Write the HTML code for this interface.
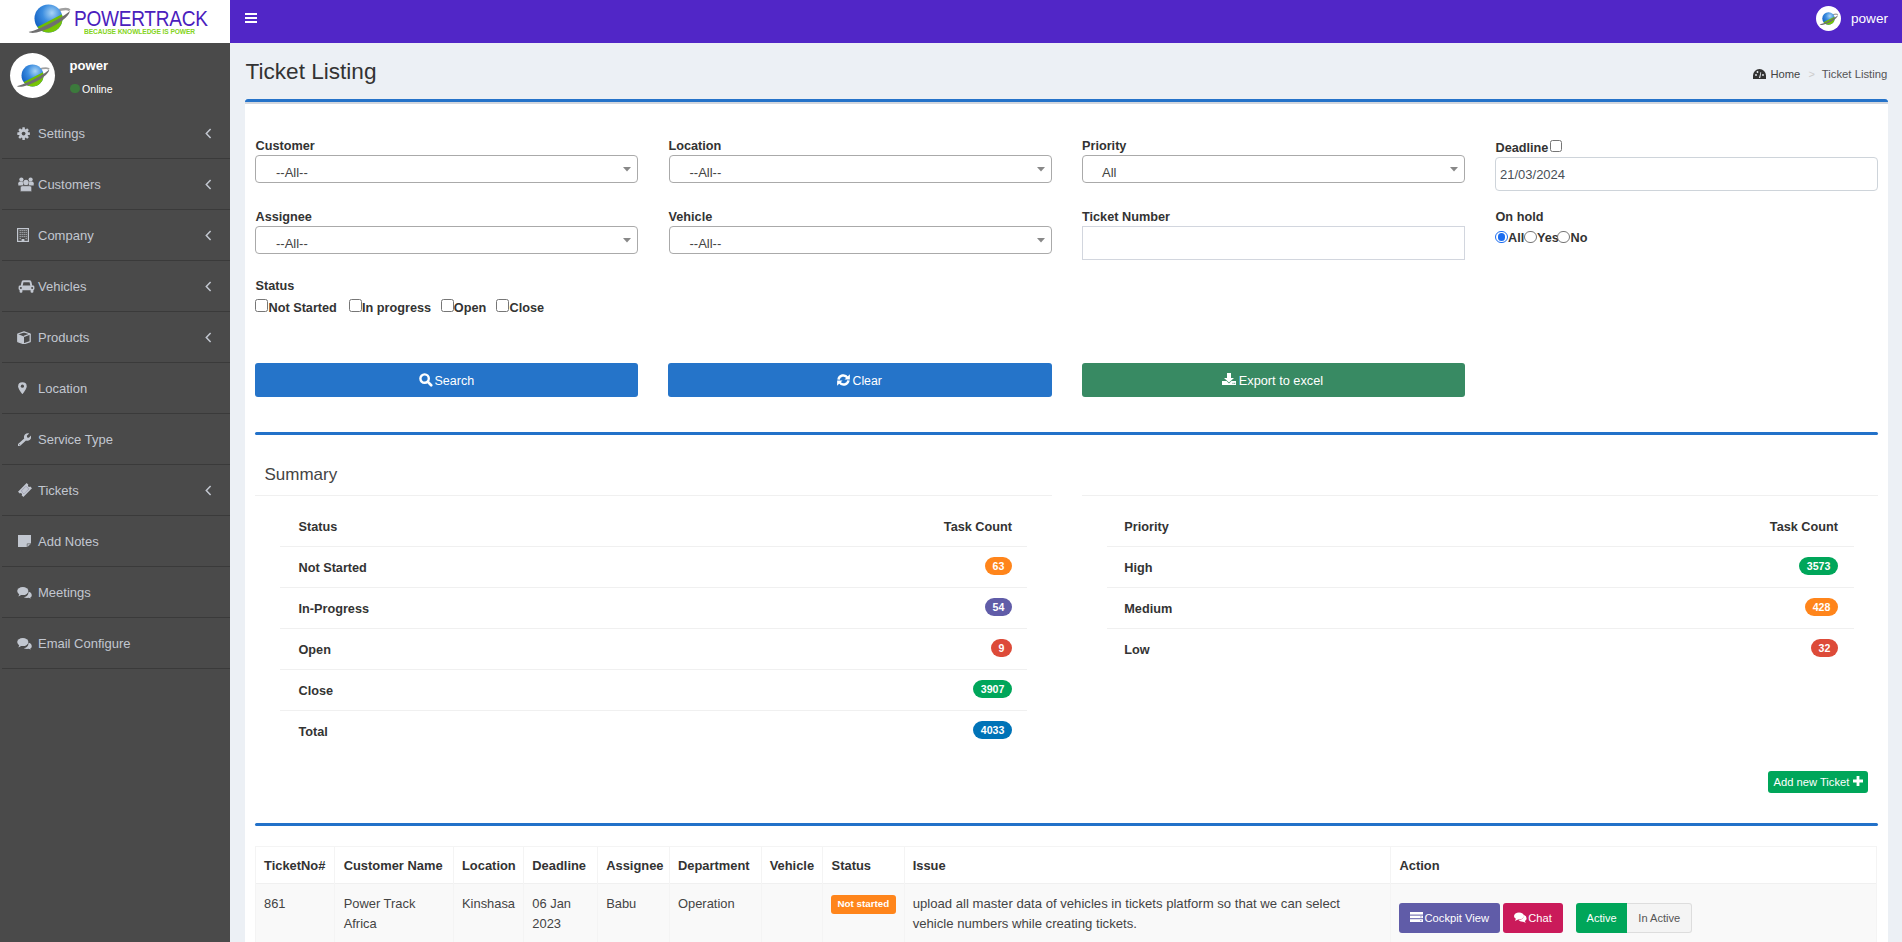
<!DOCTYPE html><html><head><meta charset="utf-8"><title>Ticket Listing</title><style>
*{margin:0;padding:0;box-sizing:border-box}
html,body{width:1902px;height:942px;overflow:hidden;background:#ecf0f5;font-family:"Liberation Sans",sans-serif}
.a{position:absolute;display:block}
.t{position:absolute;line-height:1;white-space:nowrap}
</style></head><body><div class="a" style="left:0px;top:0px;width:230px;height:43px;background:#fff"></div><div class="a" style="left:230px;top:0px;width:1672px;height:43px;background:#5126c7"></div><div class="a" style="left:245px;top:13px;width:12px;height:2px;background:#fff"></div><div class="a" style="left:245px;top:17px;width:12px;height:2px;background:#fff"></div><div class="a" style="left:245px;top:21px;width:12px;height:2px;background:#fff"></div><svg class="a" style="left:20px;top:0px;" width="60" height="43" viewBox="0 0 60 43"><defs><radialGradient id="gbL" cx=".62" cy=".3" r=".75"><stop offset="0" stop-color="#a9d4f5"/><stop offset=".45" stop-color="#3d8ee0"/><stop offset="1" stop-color="#0d5bc0"/></radialGradient>
<linearGradient id="ggL" x1="0" y1="0" x2="0" y2="1"><stop offset="0" stop-color="#6cbd00"/><stop offset="1" stop-color="#9be21a"/></linearGradient>
<clipPath id="gcL"><circle cx="28.5" cy="18.5" r="14"/></clipPath></defs>
<g transform="rotate(-27 29.0 21.0)"><path d="M29.0 14.5 A23.0 6.5 0 0 1 52.0 21.0" fill="none" stroke="#a0a0a0" stroke-width="2.4"/></g>
<circle cx="28.5" cy="18.5" r="14" fill="url(#gbL)"/>
<g clip-path="url(#gcL)"><g transform="rotate(-27 29.0 21.0)"><rect x="6.0" y="21.0" width="46.0" height="42" fill="url(#ggL)"/></g></g>
<g transform="rotate(-27 29.0 21.0)"><path d="M52.0 21.0 A23.0 6.5 0 0 1 6.0 21.0 A23.0 2.6 0 0 0 52.0 21.0Z" fill="#6f6f6f"/></g></svg><div class="t" style="left:73.50px;top:7.52px;font-size:21.6px;font-weight:400;color:#4a20bd;letter-spacing:-0.3px;transform:scaleX(0.883);transform-origin:0 0">POWERTRACK</div><div class="t" style="left:84.00px;top:27.77px;font-size:7.6px;font-weight:700;color:#84d420;letter-spacing:-0.1px;transform:scaleX(0.875);transform-origin:0 0">BECAUSE KNOWLEDGE IS POWER</div><div class="a" style="left:1816px;top:6px;width:25px;height:25px;background:#fff;border-radius:50%"></div><svg class="a" style="left:1816px;top:6px;" width="25" height="25" viewBox="0 0 25 25"><defs><radialGradient id="gbN" cx=".62" cy=".3" r=".75"><stop offset="0" stop-color="#a9d4f5"/><stop offset=".45" stop-color="#3d8ee0"/><stop offset="1" stop-color="#0d5bc0"/></radialGradient>
<linearGradient id="ggN" x1="0" y1="0" x2="0" y2="1"><stop offset="0" stop-color="#6cbd00"/><stop offset="1" stop-color="#9be21a"/></linearGradient>
<clipPath id="gcN"><circle cx="12.5" cy="12.5" r="6.2"/></clipPath></defs>
<g transform="rotate(-27 12.721428571428572 13.607142857142858)"><path d="M12.721428571428572 10.728571428571428 A10.185714285714287 2.878571428571429 0 0 1 22.90714285714286 13.607142857142858" fill="none" stroke="#a0a0a0" stroke-width="1.062857142857143"/></g>
<circle cx="12.5" cy="12.5" r="6.2" fill="url(#gbN)"/>
<g clip-path="url(#gcN)"><g transform="rotate(-27 12.721428571428572 13.607142857142858)"><rect x="2.5357142857142847" y="13.607142857142858" width="20.371428571428574" height="18.6" fill="url(#ggN)"/></g></g>
<g transform="rotate(-27 12.721428571428572 13.607142857142858)"><path d="M22.90714285714286 13.607142857142858 A10.185714285714287 2.878571428571429 0 0 1 2.5357142857142847 13.607142857142858 A10.185714285714287 1.1514285714285717 0 0 0 22.90714285714286 13.607142857142858Z" fill="#6f6f6f"/></g></svg><div class="t" style="left:1851.00px;top:12.29px;font-size:13.6px;font-weight:400;color:#fff;">power</div><div class="a" style="left:0px;top:43px;width:230px;height:899px;background:#4a4a4a"></div><div class="a" style="left:10px;top:53px;width:45px;height:45px;background:#fff;border-radius:50%"></div><svg class="a" style="left:10px;top:53px;" width="45" height="45" viewBox="0 0 45 45"><defs><radialGradient id="gbS" cx=".62" cy=".3" r=".75"><stop offset="0" stop-color="#a9d4f5"/><stop offset=".45" stop-color="#3d8ee0"/><stop offset="1" stop-color="#0d5bc0"/></radialGradient>
<linearGradient id="ggS" x1="0" y1="0" x2="0" y2="1"><stop offset="0" stop-color="#6cbd00"/><stop offset="1" stop-color="#9be21a"/></linearGradient>
<clipPath id="gcS"><circle cx="22.5" cy="22.5" r="11"/></clipPath></defs>
<g transform="rotate(-27 22.892857142857142 24.464285714285715)"><path d="M22.892857142857142 19.357142857142858 A18.07142857142857 5.107142857142857 0 0 1 40.96428571428571 24.464285714285715" fill="none" stroke="#a0a0a0" stroke-width="1.8857142857142857"/></g>
<circle cx="22.5" cy="22.5" r="11" fill="url(#gbS)"/>
<g clip-path="url(#gcS)"><g transform="rotate(-27 22.892857142857142 24.464285714285715)"><rect x="4.821428571428573" y="24.464285714285715" width="36.14285714285714" height="33" fill="url(#ggS)"/></g></g>
<g transform="rotate(-27 22.892857142857142 24.464285714285715)"><path d="M40.96428571428571 24.464285714285715 A18.07142857142857 5.107142857142857 0 0 1 4.821428571428573 24.464285714285715 A18.07142857142857 2.0428571428571427 0 0 0 40.96428571428571 24.464285714285715Z" fill="#6f6f6f"/></g></svg><div class="t" style="left:69.50px;top:59.21px;font-size:13.1px;font-weight:700;color:#fff;">power</div><div class="a" style="left:70px;top:83.8px;width:9.5px;height:9.5px;background:#3c7a3c;border-radius:50%"></div><div class="t" style="left:82.00px;top:84.13px;font-size:10.6px;font-weight:400;color:#fff;">Online</div><div class="a" style="left:1.5px;top:158px;width:228.5px;height:1px;background:#3a3a3a"></div><svg class="a" style="left:17.3px;top:126.5px;" width="13.2" height="13.2" viewBox="0 0 13.2 13.2"><g fill="#c2c7d0"><rect x="5.3" y="0.3" width="2.6" height="12.6" rx=".5" transform="rotate(0 6.6 6.6)"/><rect x="5.3" y="0.3" width="2.6" height="12.6" rx=".5" transform="rotate(45 6.6 6.6)"/><rect x="5.3" y="0.3" width="2.6" height="12.6" rx=".5" transform="rotate(90 6.6 6.6)"/><rect x="5.3" y="0.3" width="2.6" height="12.6" rx=".5" transform="rotate(135 6.6 6.6)"/><circle cx="6.6" cy="6.6" r="4.6"/></g><circle cx="6.6" cy="6.6" r="1.9" fill="#4a4a4a"/></svg><div class="t" style="left:38.00px;top:126.80px;font-size:13px;font-weight:400;color:#c2c7d0;">Settings</div><svg class="a" style="left:204.5px;top:127.5px;" width="7" height="11" viewBox="0 0 7 11"><path d="M5.6 1 L1.3 5.5 L5.6 10" stroke="#c2c7d0" stroke-width="1.5" fill="none"/></svg><div class="a" style="left:1.5px;top:209px;width:228.5px;height:1px;background:#3a3a3a"></div><svg class="a" style="left:17.5px;top:176.5px;" width="16" height="15" viewBox="0 0 16 15"><g fill="#c2c7d0"><circle cx="3.4" cy="2.5" r="2.1"/><circle cx="12.6" cy="2.5" r="2.1"/><path d="M0.3 8.6 L0.3 6.2 Q0.3 4.6 2 4.6 L5.2 4.6 L5.2 8.6Z"/><path d="M15.7 8.6 L15.7 6.2 Q15.7 4.6 14 4.6 L10.8 4.6 L10.8 8.6Z"/></g><circle cx="8" cy="5.4" r="3.1" fill="#4a4a4a"/><circle cx="8" cy="5.4" r="2.7" fill="#c2c7d0"/><path d="M2.4 14.4 L2.4 10.8 Q2.4 8.8 4.4 8.8 L11.6 8.8 Q13.6 8.8 13.6 10.8 L13.6 14.4Z" fill="#c2c7d0" stroke="#4a4a4a" stroke-width=".5"/></svg><div class="t" style="left:38.00px;top:177.80px;font-size:13px;font-weight:400;color:#c2c7d0;">Customers</div><svg class="a" style="left:204.5px;top:178.5px;" width="7" height="11" viewBox="0 0 7 11"><path d="M5.6 1 L1.3 5.5 L5.6 10" stroke="#c2c7d0" stroke-width="1.5" fill="none"/></svg><div class="a" style="left:1.5px;top:260px;width:228.5px;height:1px;background:#3a3a3a"></div><svg class="a" style="left:17.4px;top:227.8px;" width="12" height="14" viewBox="0 0 12 14"><rect x="0.6" y="0.6" width="10.8" height="12.8" fill="none" stroke="#c2c7d0" stroke-width="1.2"/><rect x="2.6" y="2.1" width="1.1" height="1.1" fill="#c2c7d0"/><rect x="2.6" y="4.1" width="1.1" height="1.1" fill="#c2c7d0"/><rect x="2.6" y="6.1" width="1.1" height="1.1" fill="#c2c7d0"/><rect x="2.6" y="8.1" width="1.1" height="1.1" fill="#c2c7d0"/><rect x="4.6" y="2.1" width="1.1" height="1.1" fill="#c2c7d0"/><rect x="4.6" y="4.1" width="1.1" height="1.1" fill="#c2c7d0"/><rect x="4.6" y="6.1" width="1.1" height="1.1" fill="#c2c7d0"/><rect x="4.6" y="8.1" width="1.1" height="1.1" fill="#c2c7d0"/><rect x="6.6" y="2.1" width="1.1" height="1.1" fill="#c2c7d0"/><rect x="6.6" y="4.1" width="1.1" height="1.1" fill="#c2c7d0"/><rect x="6.6" y="6.1" width="1.1" height="1.1" fill="#c2c7d0"/><rect x="6.6" y="8.1" width="1.1" height="1.1" fill="#c2c7d0"/><rect x="8.6" y="2.1" width="1.1" height="1.1" fill="#c2c7d0"/><rect x="8.6" y="4.1" width="1.1" height="1.1" fill="#c2c7d0"/><rect x="8.6" y="6.1" width="1.1" height="1.1" fill="#c2c7d0"/><rect x="8.6" y="8.1" width="1.1" height="1.1" fill="#c2c7d0"/><rect x="2.6" y="10.1" width="1.1" height="1.1" fill="#c2c7d0"/><rect x="8.6" y="10.1" width="1.1" height="1.1" fill="#c2c7d0"/><rect x="4.6" y="11" width="2.8" height="2.2" fill="#c2c7d0"/></svg><div class="t" style="left:38.00px;top:228.80px;font-size:13px;font-weight:400;color:#c2c7d0;">Company</div><svg class="a" style="left:204.5px;top:229.5px;" width="7" height="11" viewBox="0 0 7 11"><path d="M5.6 1 L1.3 5.5 L5.6 10" stroke="#c2c7d0" stroke-width="1.5" fill="none"/></svg><div class="a" style="left:1.5px;top:311px;width:228.5px;height:1px;background:#3a3a3a"></div><svg class="a" style="left:17.5px;top:280px;" width="17" height="13" viewBox="0 0 17 13"><path d="M3.6 6 L4.5 2 Q4.8 1.2 5.6 1.2 L11.4 1.2 Q12.2 1.2 12.5 2 L13.4 6" fill="none" stroke="#c2c7d0" stroke-width="1.9"/><rect x="0.6" y="5.6" width="15.8" height="4.6" rx="1.4" fill="#c2c7d0"/><circle cx="2.9" cy="7.9" r="1" fill="#4a4a4a"/><circle cx="14.1" cy="7.9" r="1" fill="#4a4a4a"/><rect x="1.6" y="9.4" width="2.8" height="3.4" rx="1" fill="#c2c7d0"/><rect x="12.6" y="9.4" width="2.8" height="3.4" rx="1" fill="#c2c7d0"/></svg><div class="t" style="left:38.00px;top:279.80px;font-size:13px;font-weight:400;color:#c2c7d0;">Vehicles</div><svg class="a" style="left:204.5px;top:280.5px;" width="7" height="11" viewBox="0 0 7 11"><path d="M5.6 1 L1.3 5.5 L5.6 10" stroke="#c2c7d0" stroke-width="1.5" fill="none"/></svg><div class="a" style="left:1.5px;top:362px;width:228.5px;height:1px;background:#3a3a3a"></div><svg class="a" style="left:17.4px;top:330.7px;" width="14" height="13.6" viewBox="0 0 14 13.6"><path d="M7 0.8 L13.2 3 L13.2 10.6 L7 12.8 L0.8 10.6 L0.8 3Z" fill="none" stroke="#c2c7d0" stroke-width="1.3" stroke-linejoin="round"/><path d="M0.8 3 L7 5.4 L7 12.8 L0.8 10.6Z" fill="#c2c7d0"/><path d="M7 5.4 L13.2 3" stroke="#c2c7d0" stroke-width="1.3"/></svg><div class="t" style="left:38.00px;top:330.80px;font-size:13px;font-weight:400;color:#c2c7d0;">Products</div><svg class="a" style="left:204.5px;top:331.5px;" width="7" height="11" viewBox="0 0 7 11"><path d="M5.6 1 L1.3 5.5 L5.6 10" stroke="#c2c7d0" stroke-width="1.5" fill="none"/></svg><div class="a" style="left:1.5px;top:413px;width:228.5px;height:1px;background:#3a3a3a"></div><svg class="a" style="left:17.6px;top:381.7px;" width="9" height="12.4" viewBox="0 0 9 12.4"><path d="M4.4 0.2 Q8.7 0.2 8.7 4.4 Q8.7 6.6 4.4 12.2 Q0.1 6.6 0.1 4.4 Q0.1 0.2 4.4 0.2Z" fill="#c2c7d0"/><circle cx="4.4" cy="4.2" r="1.6" fill="#4a4a4a"/></svg><div class="t" style="left:38.00px;top:381.80px;font-size:13px;font-weight:400;color:#c2c7d0;">Location</div><div class="a" style="left:1.5px;top:464px;width:228.5px;height:1px;background:#3a3a3a"></div><svg class="a" style="left:17.9px;top:432.6px;" width="13.6" height="13.8" viewBox="0 0 13.6 13.8"><path d="M2.2 12.8 Q1 13.9 0 12.9 Q-0.9 11.8 0.3 10.7 L6.2 5.5 Q5.4 3.3 6.9 1.6 Q8.6 -0.2 11.2 0.4 L8.8 2.8 L9.2 4.4 L10.8 4.8 L13.2 2.4 Q13.8 5 12 6.7 Q10.3 8.2 8 7.5Z" fill="#c2c7d0"/><circle cx="1.6" cy="11.7" r=".5" fill="#4a4a4a"/></svg><div class="t" style="left:38.00px;top:432.80px;font-size:13px;font-weight:400;color:#c2c7d0;">Service Type</div><div class="a" style="left:1.5px;top:515px;width:228.5px;height:1px;background:#3a3a3a"></div><svg class="a" style="left:17.9px;top:482.9px;" width="14" height="14" viewBox="0 0 14 14"><g transform="rotate(-45 7 7)"><path d="M0.9 3.2 L13.1 3.2 L13.1 5.7 Q11.8 5.8 11.8 7 Q11.8 8.2 13.1 8.3 L13.1 10.8 L0.9 10.8 L0.9 8.3 Q2.2 8.2 2.2 7 Q2.2 5.8 0.9 5.7Z" fill="#c2c7d0"/><rect x="3.6" y="5" width="6.8" height="4" fill="none" stroke="#7d7596" stroke-width=".7" stroke-dasharray=".9 .7"/></g></svg><div class="t" style="left:38.00px;top:483.80px;font-size:13px;font-weight:400;color:#c2c7d0;">Tickets</div><svg class="a" style="left:204.5px;top:484.5px;" width="7" height="11" viewBox="0 0 7 11"><path d="M5.6 1 L1.3 5.5 L5.6 10" stroke="#c2c7d0" stroke-width="1.5" fill="none"/></svg><div class="a" style="left:1.5px;top:566px;width:228.5px;height:1px;background:#3a3a3a"></div><svg class="a" style="left:17.5px;top:534.7px;" width="13" height="12.3" viewBox="0 0 13 12.3"><path d="M0 0 L13 0 L13 8.6 L9 12.3 L0 12.3Z" fill="#c2c7d0"/><path d="M9.2 12.3 L9.2 8.8 L13 8.8Z" fill="#c2c7d0" stroke="#4a4a4a" stroke-width=".6"/></svg><div class="t" style="left:38.00px;top:534.80px;font-size:13px;font-weight:400;color:#c2c7d0;">Add Notes</div><div class="a" style="left:1.5px;top:617px;width:228.5px;height:1px;background:#3a3a3a"></div><svg class="a" style="left:17.4px;top:586.5px;" width="15" height="12" viewBox="0 0 15 12"><g fill="#c2c7d0"><path d="M9.6 4.4 Q14.8 4.6 14.8 8.2 Q14.8 10 13.2 10.6 L14 11.4 L11.4 10.8 Q8.8 11.2 6.8 10.2 Q10.6 9.6 11.4 6.6Z"/></g><ellipse cx="5.8" cy="4.2" rx="6" ry="4.4" fill="#4a4a4a"/><g fill="#c2c7d0"><ellipse cx="5.8" cy="4.1" rx="5.6" ry="4"/><path d="M1.4 9.4 L2.4 6.8 L4.6 7.8Z"/></g></svg><div class="t" style="left:38.00px;top:585.80px;font-size:13px;font-weight:400;color:#c2c7d0;">Meetings</div><div class="a" style="left:1.5px;top:668px;width:228.5px;height:1px;background:#3a3a3a"></div><svg class="a" style="left:17.4px;top:637.5px;" width="15" height="12" viewBox="0 0 15 12"><g fill="#c2c7d0"><path d="M9.6 4.4 Q14.8 4.6 14.8 8.2 Q14.8 10 13.2 10.6 L14 11.4 L11.4 10.8 Q8.8 11.2 6.8 10.2 Q10.6 9.6 11.4 6.6Z"/></g><ellipse cx="5.8" cy="4.2" rx="6" ry="4.4" fill="#4a4a4a"/><g fill="#c2c7d0"><ellipse cx="5.8" cy="4.1" rx="5.6" ry="4"/><path d="M1.4 9.4 L2.4 6.8 L4.6 7.8Z"/></g></svg><div class="t" style="left:38.00px;top:636.80px;font-size:13px;font-weight:400;color:#c2c7d0;">Email Configure</div><div class="t" style="left:245.50px;top:61.07px;font-size:22.6px;font-weight:400;color:#333;">Ticket Listing</div><div class="t" style="left:1770.50px;top:69.02px;font-size:11.2px;font-weight:400;color:#444;">Home</div><div class="t" style="left:1808.50px;top:69.19px;font-size:11px;font-weight:400;color:#ccc;">&gt;</div><div class="t" style="left:1821.80px;top:68.93px;font-size:11.3px;font-weight:400;color:#555;">Ticket Listing</div><svg class="a" style="left:1753px;top:69px;" width="13" height="10" viewBox="0 0 13 10"><path d="M6.5 0 A6.5 6.5 0 0 1 13 6.5 L13 10 L0 10 L0 6.5 A6.5 6.5 0 0 1 6.5 0Z" fill="#333"/><path d="M6 9 L7.6 3 L8.2 3.2 L7.2 9Z" fill="#ecf0f5"/><circle cx="3" cy="6" r=".9" fill="#ecf0f5"/><circle cx="4.5" cy="3" r=".9" fill="#ecf0f5"/><circle cx="10" cy="6" r=".9" fill="#ecf0f5"/></svg><div class="a" style="left:245px;top:99px;width:1643px;height:843px;background:#fff"></div><div class="a" style="left:245px;top:99px;width:1643px;height:3px;background:#2573c9;border-radius:3px 3px 0 0"></div><div class="a" style="left:245px;top:102px;width:1643px;height:2px;background:#d3d7de"></div><div class="t" style="left:255.50px;top:140.05px;font-size:12.7px;font-weight:700;color:#333;">Customer</div><div class="a" style="left:255px;top:155px;width:383px;height:28px;border:1px solid #aaa;border-radius:4px;background:#fff"></div><div class="t" style="left:276.00px;top:166.30px;font-size:13px;font-weight:400;color:#444;">--All--</div><svg class="a" style="left:623px;top:167px;" width="8" height="5" viewBox="0 0 8 5"><path d="M0 0 L8 0 L4 4.6Z" fill="#888"/></svg><div class="t" style="left:668.50px;top:140.05px;font-size:12.7px;font-weight:700;color:#333;">Location</div><div class="a" style="left:668.5px;top:155px;width:383px;height:28px;border:1px solid #aaa;border-radius:4px;background:#fff"></div><div class="t" style="left:689.50px;top:166.30px;font-size:13px;font-weight:400;color:#444;">--All--</div><svg class="a" style="left:1036.5px;top:167px;" width="8" height="5" viewBox="0 0 8 5"><path d="M0 0 L8 0 L4 4.6Z" fill="#888"/></svg><div class="t" style="left:1082.00px;top:140.05px;font-size:12.7px;font-weight:700;color:#333;">Priority</div><div class="a" style="left:1082px;top:155px;width:383px;height:28px;border:1px solid #aaa;border-radius:4px;background:#fff"></div><div class="t" style="left:1102.00px;top:166.30px;font-size:13px;font-weight:400;color:#444;">All</div><svg class="a" style="left:1450px;top:167px;" width="8" height="5" viewBox="0 0 8 5"><path d="M0 0 L8 0 L4 4.6Z" fill="#888"/></svg><div class="t" style="left:1495.50px;top:141.95px;font-size:12.7px;font-weight:700;color:#333;">Deadline</div><div class="a" style="left:1549.5px;top:139.5px;width:12.5px;height:12.5px;border:1px solid #767676;border-radius:2.5px;background:#fff"></div><div class="a" style="left:1495px;top:157px;width:383px;height:34px;border:1px solid #ced4da;border-radius:4px;background:#fff"></div><div class="t" style="left:1500.00px;top:168.00px;font-size:13px;font-weight:400;color:#495057;">21/03/2024</div><div class="t" style="left:255.50px;top:210.85px;font-size:12.7px;font-weight:700;color:#333;">Assignee</div><div class="a" style="left:255px;top:226px;width:383px;height:28px;border:1px solid #aaa;border-radius:4px;background:#fff"></div><div class="t" style="left:276.00px;top:237.30px;font-size:13px;font-weight:400;color:#444;">--All--</div><svg class="a" style="left:623px;top:238px;" width="8" height="5" viewBox="0 0 8 5"><path d="M0 0 L8 0 L4 4.6Z" fill="#888"/></svg><div class="t" style="left:668.50px;top:210.85px;font-size:12.7px;font-weight:700;color:#333;">Vehicle</div><div class="a" style="left:668.5px;top:226px;width:383px;height:28px;border:1px solid #aaa;border-radius:4px;background:#fff"></div><div class="t" style="left:689.50px;top:237.30px;font-size:13px;font-weight:400;color:#444;">--All--</div><svg class="a" style="left:1036.5px;top:238px;" width="8" height="5" viewBox="0 0 8 5"><path d="M0 0 L8 0 L4 4.6Z" fill="#888"/></svg><div class="t" style="left:1082.00px;top:210.85px;font-size:12.7px;font-weight:700;color:#333;">Ticket Number</div><div class="a" style="left:1082px;top:226px;width:383px;height:34px;border:1px solid #d2d6de;background:#fff"></div><div class="t" style="left:1495.50px;top:210.85px;font-size:12.7px;font-weight:700;color:#333;">On hold</div><div class="a" style="left:1495.2px;top:230.5px;width:12.5px;height:12.5px;border-radius:50%;background:#fff;border:1.3px solid #1a6cf0"></div><div class="a" style="left:1497.6000000000001px;top:232.9px;width:7.7px;height:7.7px;border-radius:50%;background:#1a6cf0"></div><div class="t" style="left:1508.00px;top:232.35px;font-size:12.7px;font-weight:700;color:#333;">All</div><div class="a" style="left:1524.3px;top:230.5px;width:12.5px;height:12.5px;border-radius:50%;background:#fff;border:1px solid #767676"></div><div class="t" style="left:1537.00px;top:232.35px;font-size:12.7px;font-weight:700;color:#333;">Yes</div><div class="a" style="left:1557.3px;top:230.5px;width:12.5px;height:12.5px;border-radius:50%;background:#fff;border:1px solid #767676"></div><div class="t" style="left:1570.50px;top:232.35px;font-size:12.7px;font-weight:700;color:#333;">No</div><div class="t" style="left:255.50px;top:279.85px;font-size:12.7px;font-weight:700;color:#333;">Status</div><div class="a" style="left:255.2px;top:299.3px;width:12.5px;height:12.5px;border:1px solid #767676;border-radius:2.5px;background:#fff"></div><div class="t" style="left:268.50px;top:302.15px;font-size:12.7px;font-weight:700;color:#333;">Not Started</div><div class="a" style="left:349.1px;top:299.3px;width:12.5px;height:12.5px;border:1px solid #767676;border-radius:2.5px;background:#fff"></div><div class="t" style="left:362.00px;top:302.15px;font-size:12.7px;font-weight:700;color:#333;">In progress</div><div class="a" style="left:441px;top:299.3px;width:12.5px;height:12.5px;border:1px solid #767676;border-radius:2.5px;background:#fff"></div><div class="t" style="left:453.80px;top:302.15px;font-size:12.7px;font-weight:700;color:#333;">Open</div><div class="a" style="left:496px;top:299.3px;width:12.5px;height:12.5px;border:1px solid #767676;border-radius:2.5px;background:#fff"></div><div class="t" style="left:509.50px;top:302.15px;font-size:12.7px;font-weight:700;color:#333;">Close</div><div class="a" style="left:255px;top:363px;width:383px;height:34px;background:#2574c9;border-radius:3px;"></div><div class="a" style="left:668px;top:363px;width:384px;height:34px;background:#2574c9;border-radius:3px;"></div><div class="a" style="left:1082px;top:363px;width:383px;height:34px;background:#388a63;border-radius:3px;"></div><svg class="a" style="left:418.5px;top:373.2px;" width="14" height="14" viewBox="0 0 14 14"><circle cx="5.6" cy="5.6" r="4.2" stroke="#fff" stroke-width="2.4" fill="none"/><path d="M8.6 8.6 L12.2 12.2" stroke="#fff" stroke-width="2.7" stroke-linecap="round"/></svg><div class="t" style="left:434.50px;top:375.32px;font-size:12.5px;font-weight:400;color:#fff;">Search</div><svg class="a" style="left:837px;top:374px;" width="13" height="12" viewBox="0 0 13 12"><path d="M1.5 5.6 A4.9 4.9 0 0 1 10.4 3.6" stroke="#fff" stroke-width="2.5" fill="none"/><path d="M12.9 0.2 L12.9 5.6 L7.5 5.6Z" fill="#fff"/><path d="M11.5 6.4 A4.9 4.9 0 0 1 2.6 8.4" stroke="#fff" stroke-width="2.5" fill="none"/><path d="M0.1 11.8 L0.1 6.4 L5.5 6.4Z" fill="#fff"/></svg><div class="t" style="left:852.50px;top:375.49px;font-size:12.3px;font-weight:400;color:#fff;">Clear</div><svg class="a" style="left:1222px;top:373px;" width="14" height="12" viewBox="0 0 14 12"><path d="M5 0 L9 0 L9 5 L12 5 L7 9.6 L2 5 L5 5Z" fill="#fff"/><path d="M0 8 L4.6 8 L7 10.4 L9.4 8 L14 8 L14 12 L0 12Z" fill="#fff"/><rect x="10.5" y="9.8" width="1" height="1" fill="#388a63"/><rect x="12.2" y="9.8" width="1" height="1" fill="#388a63"/></svg><div class="t" style="left:1238.80px;top:375.11px;font-size:12.75px;font-weight:400;color:#fff;">Export to excel</div><div class="a" style="left:255px;top:432px;width:1623px;height:3px;background:#2271c9;border-radius:2px"></div><div class="t" style="left:264.50px;top:466.21px;font-size:17px;font-weight:400;color:#444;">Summary</div><div class="a" style="left:255px;top:495px;width:797px;height:1px;background:#f0f0f0"></div><div class="a" style="left:1082px;top:495px;width:796px;height:1px;background:#f0f0f0"></div><div class="t" style="left:298.50px;top:520.85px;font-size:12.7px;font-weight:700;color:#333;">Status</div><div class="t" style="right:890.00px;top:520.85px;font-size:12.7px;font-weight:700;color:#333;">Task Count</div><div class="a" style="left:280px;top:546px;width:747px;height:1px;background:#f0f0f0"></div><div class="t" style="left:298.50px;top:561.75px;font-size:12.7px;font-weight:700;color:#333;">Not Started</div><div class="a" style="right:890px;top:557.3px;height:17.4px;padding:1.2px 7.7px 0 7.7px;border-radius:9px;background:#ff851b;color:#fff;font-size:10.6px;font-weight:700;line-height:16.2px;text-align:center">63</div><div class="a" style="left:280px;top:587px;width:747px;height:1px;background:#f0f0f0"></div><div class="t" style="left:298.50px;top:602.75px;font-size:12.7px;font-weight:700;color:#333;">In-Progress</div><div class="a" style="right:890px;top:598.3px;height:17.4px;padding:1.2px 7.7px 0 7.7px;border-radius:9px;background:#605ca8;color:#fff;font-size:10.6px;font-weight:700;line-height:16.2px;text-align:center">54</div><div class="a" style="left:280px;top:628px;width:747px;height:1px;background:#f0f0f0"></div><div class="t" style="left:298.50px;top:643.75px;font-size:12.7px;font-weight:700;color:#333;">Open</div><div class="a" style="right:890px;top:639.3px;height:17.4px;padding:1.2px 7.7px 0 7.7px;border-radius:9px;background:#dd4b39;color:#fff;font-size:10.6px;font-weight:700;line-height:16.2px;text-align:center">9</div><div class="a" style="left:280px;top:669px;width:747px;height:1px;background:#f0f0f0"></div><div class="t" style="left:298.50px;top:684.75px;font-size:12.7px;font-weight:700;color:#333;">Close</div><div class="a" style="right:890px;top:680.3px;height:17.4px;padding:1.2px 7.7px 0 7.7px;border-radius:9px;background:#00a65a;color:#fff;font-size:10.6px;font-weight:700;line-height:16.2px;text-align:center">3907</div><div class="a" style="left:280px;top:710px;width:747px;height:1px;background:#f0f0f0"></div><div class="t" style="left:298.50px;top:725.75px;font-size:12.7px;font-weight:700;color:#333;">Total</div><div class="a" style="right:890px;top:721.3px;height:17.4px;padding:1.2px 7.7px 0 7.7px;border-radius:9px;background:#0073b7;color:#fff;font-size:10.6px;font-weight:700;line-height:16.2px;text-align:center">4033</div><div class="t" style="left:1124.30px;top:520.85px;font-size:12.7px;font-weight:700;color:#333;">Priority</div><div class="t" style="right:64.00px;top:520.85px;font-size:12.7px;font-weight:700;color:#333;">Task Count</div><div class="a" style="left:1107px;top:546px;width:746.5px;height:1px;background:#f0f0f0"></div><div class="t" style="left:1124.30px;top:561.75px;font-size:12.7px;font-weight:700;color:#333;">High</div><div class="a" style="right:64px;top:557.3px;height:17.4px;padding:1.2px 7.7px 0 7.7px;border-radius:9px;background:#00a65a;color:#fff;font-size:10.6px;font-weight:700;line-height:16.2px;text-align:center">3573</div><div class="a" style="left:1107px;top:587px;width:746.5px;height:1px;background:#f0f0f0"></div><div class="t" style="left:1124.30px;top:602.75px;font-size:12.7px;font-weight:700;color:#333;">Medium</div><div class="a" style="right:64px;top:598.3px;height:17.4px;padding:1.2px 7.7px 0 7.7px;border-radius:9px;background:#ff851b;color:#fff;font-size:10.6px;font-weight:700;line-height:16.2px;text-align:center">428</div><div class="a" style="left:1107px;top:628px;width:746.5px;height:1px;background:#f0f0f0"></div><div class="t" style="left:1124.30px;top:643.75px;font-size:12.7px;font-weight:700;color:#333;">Low</div><div class="a" style="right:64px;top:639.3px;height:17.4px;padding:1.2px 7.7px 0 7.7px;border-radius:9px;background:#dd4b39;color:#fff;font-size:10.6px;font-weight:700;line-height:16.2px;text-align:center">32</div><div class="a" style="left:1768px;top:771px;width:100px;height:21.5px;background:#00a65a;border-radius:3px;"></div><div class="t" style="left:1773.50px;top:776.72px;font-size:11.2px;font-weight:400;color:#fff;">Add new Ticket</div><svg class="a" style="left:1852.5px;top:775.8px;" width="10" height="10" viewBox="0 0 10 10"><path d="M3.6 0 L6.4 0 L6.4 3.6 L10 3.6 L10 6.4 L6.4 6.4 L6.4 10 L3.6 10 L3.6 6.4 L0 6.4 L0 3.6 L3.6 3.6Z" fill="#fff"/></svg><div class="a" style="left:255px;top:823px;width:1623px;height:3px;background:#2271c9;border-radius:2px"></div><div class="a" style="left:255px;top:846px;width:1622px;height:96px;border:1px solid #f4f4f4;border-bottom:none;background:#fff"></div><div class="a" style="left:256px;top:883.5px;width:1620px;height:60px;background:#f9f9f9"></div><div class="a" style="left:256px;top:883px;width:1620px;height:1px;background:#f0f0f0"></div><div class="a" style="left:334px;top:847px;width:1px;height:95px;background:#f4f4f4"></div><div class="a" style="left:453px;top:847px;width:1px;height:95px;background:#f4f4f4"></div><div class="a" style="left:523px;top:847px;width:1px;height:95px;background:#f4f4f4"></div><div class="a" style="left:597px;top:847px;width:1px;height:95px;background:#f4f4f4"></div><div class="a" style="left:669px;top:847px;width:1px;height:95px;background:#f4f4f4"></div><div class="a" style="left:761px;top:847px;width:1px;height:95px;background:#f4f4f4"></div><div class="a" style="left:822px;top:847px;width:1px;height:95px;background:#f4f4f4"></div><div class="a" style="left:904px;top:847px;width:1px;height:95px;background:#f4f4f4"></div><div class="a" style="left:1390px;top:847px;width:1px;height:95px;background:#f4f4f4"></div><div class="t" style="left:264.00px;top:860.08px;font-size:12.9px;font-weight:700;color:#333;">TicketNo#</div><div class="t" style="left:343.70px;top:860.08px;font-size:12.9px;font-weight:700;color:#333;">Customer Name</div><div class="t" style="left:462.00px;top:860.08px;font-size:12.9px;font-weight:700;color:#333;">Location</div><div class="t" style="left:532.30px;top:860.08px;font-size:12.9px;font-weight:700;color:#333;">Deadline</div><div class="t" style="left:606.20px;top:860.08px;font-size:12.9px;font-weight:700;color:#333;">Assignee</div><div class="t" style="left:678.00px;top:860.08px;font-size:12.9px;font-weight:700;color:#333;">Department</div><div class="t" style="left:769.70px;top:860.08px;font-size:12.9px;font-weight:700;color:#333;">Vehicle</div><div class="t" style="left:831.60px;top:860.08px;font-size:12.9px;font-weight:700;color:#333;">Status</div><div class="t" style="left:912.70px;top:860.08px;font-size:12.9px;font-weight:700;color:#333;">Issue</div><div class="t" style="left:1399.50px;top:860.08px;font-size:12.9px;font-weight:700;color:#333;">Action</div><div class="t" style="left:264.00px;top:897.68px;font-size:12.9px;font-weight:400;color:#444;">861</div><div class="t" style="left:343.70px;top:897.68px;font-size:12.9px;font-weight:400;color:#444;">Power Track</div><div class="t" style="left:343.70px;top:917.68px;font-size:12.9px;font-weight:400;color:#444;">Africa</div><div class="t" style="left:462.00px;top:897.68px;font-size:12.9px;font-weight:400;color:#444;">Kinshasa</div><div class="t" style="left:532.30px;top:897.68px;font-size:12.9px;font-weight:400;color:#444;">06 Jan</div><div class="t" style="left:532.30px;top:917.68px;font-size:12.9px;font-weight:400;color:#444;">2023</div><div class="t" style="left:606.20px;top:897.68px;font-size:12.9px;font-weight:400;color:#444;">Babu</div><div class="t" style="left:678.00px;top:897.68px;font-size:12.9px;font-weight:400;color:#444;">Operation</div><div class="a" style="left:831px;top:895px;width:65px;height:19px;background:#ff851b;border-radius:3px;"></div><div class="t" style="left:837.50px;top:898.80px;font-size:9.8px;font-weight:700;color:#fff;">Not started</div><div class="t" style="left:912.70px;top:897.27px;font-size:13.15px;font-weight:400;color:#444;">upload all master data of vehicles in tickets platform so that we can select</div><div class="t" style="left:912.70px;top:917.27px;font-size:13.15px;font-weight:400;color:#444;">vehicle numbers while creating tickets.</div><div class="a" style="left:1399px;top:903px;width:100.5px;height:29.5px;background:#605ca8;border-radius:3px;"></div><svg class="a" style="left:1410px;top:912px;" width="13" height="10" viewBox="0 0 13 10"><rect x="0" y="0" width="13" height="2.6" fill="#fff"/><rect x="0" y="3.6" width="13" height="2.6" fill="#fff"/><rect x="0" y="7.2" width="13" height="2.8" fill="#fff"/><rect x="10.4" y="4.4" width="1" height="1" fill="#605ca8"/><rect x="10.4" y="8.1" width="1" height="1" fill="#605ca8"/></svg><div class="t" style="left:1424.50px;top:913.12px;font-size:11.2px;font-weight:400;color:#fff;">Cockpit View</div><div class="a" style="left:1503px;top:903px;width:60px;height:29.5px;background:#ca1a5a;border-radius:3px;"></div><svg class="a" style="left:1514px;top:912px;" width="13" height="11" viewBox="0 0 13 11"><g fill="#fff"><ellipse cx="5" cy="4" rx="5" ry="3.6"/><path d="M1 9 L2.2 6 L4.4 7.2Z"/><path d="M8.2 2.6 Q12.6 3.2 12.6 6.4 Q12.6 8.2 10.8 9 L11.8 10.8 L9 9.8 Q5.8 10 4.6 8 Q9 7.8 9.8 4.4 Q9.8 3.4 8.2 2.6Z"/></g></svg><div class="t" style="left:1528.30px;top:913.20px;font-size:11.1px;font-weight:400;color:#fff;">Chat</div><div class="a" style="left:1576px;top:903px;width:51px;height:29.5px;background:#00a65a;border-radius:3px;border-radius:3px 0 0 3px"></div><div class="t" style="left:1586.60px;top:913.25px;font-size:11.05px;font-weight:400;color:#fff;">Active</div><div class="a" style="left:1627px;top:903px;width:64.5px;height:29.5px;background:#f4f4f4;border:1px solid #ddd;border-left:none;border-radius:0 3px 3px 0"></div><div class="t" style="left:1638.30px;top:913.20px;font-size:11.1px;font-weight:400;color:#555;">In Active</div></body></html>
